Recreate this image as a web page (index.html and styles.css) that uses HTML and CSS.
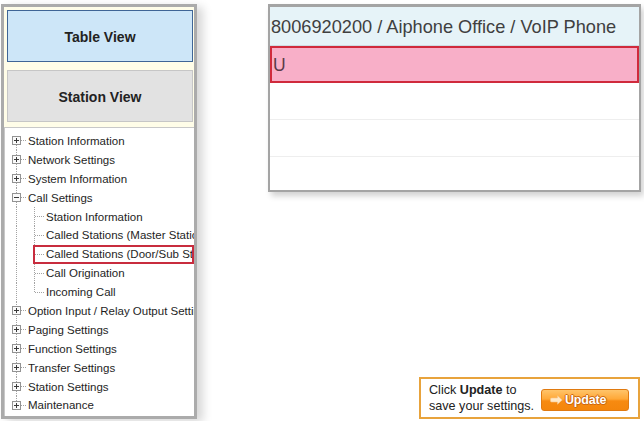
FILE: index.html
```html
<!DOCTYPE html>
<html lang="en">
<head>
<meta charset="utf-8">
<title>Station Settings</title>
<link rel="stylesheet" href="styles.css">
</head>
<body>
<div class="page">
  <aside class="side">
    <div class="view-btn table-view">Table View</div>
    <div class="view-btn station-view">Station View</div>
    <ul class="tree">
      <li class="row first"><span class="sp"></span><svg class="box" width="9" height="9" viewBox="0 0 9 9"><rect x=".5" y=".5" width="8" height="8" fill="#fafafa" stroke="#939393"/><path d="M2 4.5h5M4.5 2v5" stroke="#3a3a3a"/></svg><span class="dash"></span><span class="label">Station Information</span></li>
      <li class="row"><span class="sp"></span><svg class="box" width="9" height="9" viewBox="0 0 9 9"><rect x=".5" y=".5" width="8" height="8" fill="#fafafa" stroke="#939393"/><path d="M2 4.5h5M4.5 2v5" stroke="#3a3a3a"/></svg><span class="dash"></span><span class="label">Network Settings</span></li>
      <li class="row"><span class="sp"></span><svg class="box" width="9" height="9" viewBox="0 0 9 9"><rect x=".5" y=".5" width="8" height="8" fill="#fafafa" stroke="#939393"/><path d="M2 4.5h5M4.5 2v5" stroke="#3a3a3a"/></svg><span class="dash"></span><span class="label">System Information</span></li>
      <li class="row"><span class="sp"></span><svg class="box" width="9" height="9" viewBox="0 0 9 9"><rect x=".5" y=".5" width="8" height="8" fill="#fafafa" stroke="#939393"/><path d="M2 4.5h5" stroke="#3a3a3a"/></svg><span class="dash"></span><span class="label">Call Settings</span></li>
      <li class="row child"><span class="csp"></span><span class="hl"><span class="cdash"></span><span class="label">Station Information</span></span></li>
      <li class="row child"><span class="csp"></span><span class="hl"><span class="cdash"></span><span class="label">Called Stations (Master Station)</span></span></li>
      <li class="row child"><span class="csp"></span><span class="hl selected"><span class="cdash"></span><span class="label">Called Stations (Door/Sub Station)</span></span></li>
      <li class="row child"><span class="csp"></span><span class="hl"><span class="cdash"></span><span class="label">Call Origination</span></span></li>
      <li class="row child lastchild"><span class="csp"></span><span class="hl"><span class="cdash"></span><span class="label">Incoming Call</span></span></li>
      <li class="row"><span class="sp"></span><svg class="box" width="9" height="9" viewBox="0 0 9 9"><rect x=".5" y=".5" width="8" height="8" fill="#fafafa" stroke="#939393"/><path d="M2 4.5h5M4.5 2v5" stroke="#3a3a3a"/></svg><span class="dash"></span><span class="label">Option Input / Relay Output Settings</span></li>
      <li class="row"><span class="sp"></span><svg class="box" width="9" height="9" viewBox="0 0 9 9"><rect x=".5" y=".5" width="8" height="8" fill="#fafafa" stroke="#939393"/><path d="M2 4.5h5M4.5 2v5" stroke="#3a3a3a"/></svg><span class="dash"></span><span class="label">Paging Settings</span></li>
      <li class="row"><span class="sp"></span><svg class="box" width="9" height="9" viewBox="0 0 9 9"><rect x=".5" y=".5" width="8" height="8" fill="#fafafa" stroke="#939393"/><path d="M2 4.5h5M4.5 2v5" stroke="#3a3a3a"/></svg><span class="dash"></span><span class="label">Function Settings</span></li>
      <li class="row"><span class="sp"></span><svg class="box" width="9" height="9" viewBox="0 0 9 9"><rect x=".5" y=".5" width="8" height="8" fill="#fafafa" stroke="#939393"/><path d="M2 4.5h5M4.5 2v5" stroke="#3a3a3a"/></svg><span class="dash"></span><span class="label">Transfer Settings</span></li>
      <li class="row"><span class="sp"></span><svg class="box" width="9" height="9" viewBox="0 0 9 9"><rect x=".5" y=".5" width="8" height="8" fill="#fafafa" stroke="#939393"/><path d="M2 4.5h5M4.5 2v5" stroke="#3a3a3a"/></svg><span class="dash"></span><span class="label">Station Settings</span></li>
      <li class="row last"><span class="sp"></span><svg class="box" width="9" height="9" viewBox="0 0 9 9"><rect x=".5" y=".5" width="8" height="8" fill="#fafafa" stroke="#939393"/><path d="M2 4.5h5M4.5 2v5" stroke="#3a3a3a"/></svg><span class="dash"></span><span class="label">Maintenance</span></li>
    </ul>
  </aside>
  <main class="main">
    <div class="grid">
      <div class="grid-head">8006920200 / Aiphone Office / VoIP Phone</div>
      <div class="grid-row active">U</div>
      <div class="grid-row line"></div>
      <div class="grid-row line"></div>
      <div class="grid-row fill"></div>
    </div>
    <div class="update-box">
      <p class="update-text">Click <b>Update</b> to<br>save your settings.</p>
      <div class="update-btn">
        <svg class="arrow" width="13" height="10" viewBox="0 0 13 10"><path d="M1.5 3h6V0.8L12.2 5 7.5 9.2V7h-6a1 1 0 0 1-1-1V4a1 1 0 0 1 1-1z" fill="#ffe9c8" stroke="#f7c488" stroke-width=".6"/></svg>
        <span class="update-label">Update</span>
      </div>
    </div>
  </main>
</div>
</body>
</html>
```

FILE: styles.css
```css
* { box-sizing: border-box; }

body {
  margin: 0;
  background: #ffffff;
  font-family: "Liberation Sans", Arial, sans-serif;
  color: #1e1e1e;
}

.page {
  display: flex;
  height: 421px;
  padding: 4px 0 2px 1px;
}

/* ---------- left panel ---------- */
.side {
  width: 196px;
  height: 415px;
  border: 3px solid #ababab;
  background: #fffde8;
  display: flex;
  flex-direction: column;
  padding-top: 3px;
  box-shadow: 6px 3px 9px rgba(0, 0, 0, 0.16);
}

.view-btn {
  flex: none;
  height: 52px;
  width: 186px;
  margin-left: 3px;
  padding-top: 2px;
  display: flex;
  align-items: center;
  justify-content: center;
  font-weight: bold;
  font-size: 14px;
  color: #222;
}

.table-view {
  background: #cde6f8;
  border: 1px solid #3f6596;
}

.station-view {
  background: #e2e2e2;
  border: 1px solid #c6c6c6;
  margin-top: 8px;
}

.tree {
  --dots: repeating-linear-gradient(to bottom, #a3a3a3 0 1px, transparent 1px 2px);
  list-style: none;
  margin: 5px 0 0;
  padding: 3.5px 0 0;
  flex: 1;
  background: #ffffff;
  border-top: 1px solid #c8c8c8;
  border-left: 1px solid #c8c8c8;
  overflow: hidden;
}

.row {
  height: 18.9px;
  display: flex;
  align-items: center;
  white-space: nowrap;
  font-size: 11.5px;
  background-image: var(--dots);
  background-repeat: no-repeat;
  background-size: 1px 100%;
  background-position: 11px 0;
}

.row.first {
  background-size: 1px 50%;
  background-position: 11px 100%;
}

.row.last {
  background-size: 1px 50%;
  background-position: 11px 0;
}

.row.child {
  background-image: var(--dots), var(--dots);
  background-size: 1px 100%, 1px 100%;
  background-position: 11px 0, 29px 0;
}

.row.child.lastchild {
  background-size: 1px 100%, 1px 50%;
}

.sp { flex: none; width: 7px; }

.box { flex: none; display: block; }

.dash,
.cdash {
  flex: none;
  height: 1px;
  background: repeating-linear-gradient(to right, #a3a3a3 0 1px, transparent 1px 2px);
}

.dash { width: 5px; margin-right: 2px; }

.csp { flex: none; width: 28px; }

.hl {
  flex: 1;
  min-width: 0;
  height: 100%;
  display: flex;
  align-items: center;
  border: 2px solid transparent;
  border-right: 0;
  overflow: hidden;
}

.hl.selected {
  border-color: #c82c3e;
  border-right: 2px solid #c82c3e;
}

.cdash { width: 9px; margin-right: 2px; }

.label { color: #1e1e1e; }

/* ---------- right side ---------- */
.main {
  margin-left: 71px;
  width: 374px;
  display: flex;
  flex-direction: column;
  justify-content: space-between;
}

.grid {
  width: 373px;
  height: 188px;
  border: 2px solid #a4a4a4;
  border-top-width: 3px;
  display: flex;
  flex-direction: column;
  background: #fff;
  box-shadow: 3px 4px 6px rgba(0, 0, 0, 0.18);
}

.grid-head {
  flex: none;
  height: 39px;
  background: #e6f3f8;
  border-bottom: 1px solid #cfdde3;
  display: flex;
  align-items: center;
  padding: 3px 0 0 1px;
  font-size: 18.2px;
  color: #404040;
  white-space: nowrap;
}

.grid-row {
  flex: none;
  height: 37px;
  display: flex;
  align-items: center;
}

.grid-row.active {
  background: #f8afc8;
  border: 2px solid #d02a3c;
  padding: 1px 0 0 1px;
  font-size: 17.5px;
  color: #5a3a48;
}

.grid-row.line { border-bottom: 1px solid #eeeeee; }

.grid-row.fill { flex: 1; }

.update-box {
  align-self: flex-end;
  margin-right: 2px;
  width: 221px;
  height: 42px;
  border: 2px solid #e8a33c;
  background: #fff;
  display: flex;
  align-items: center;
  padding-left: 8px;
  gap: 7px;
}

.update-text {
  margin: 0;
  font-size: 12.6px;
  line-height: 16px;
  color: #222;
  white-space: nowrap;
}

.update-btn {
  flex: none;
  width: 88px;
  height: 22px;
  margin-top: 4px;
  border: 1px solid #e07a10;
  border-radius: 3px;
  background: linear-gradient(to bottom, #ffc46a 0%, #ffa838 45%, #f78a10 55%, #f4860c 100%);
  display: flex;
  align-items: center;
  padding-left: 8px;
  gap: 2px;
}

.arrow { display: block; }

.update-label {
  font-size: 12.5px;
  font-weight: bold;
  color: #ffffff;
  letter-spacing: -0.2px;
  text-shadow: 0 0 1px #c25a00, 1px 0 0 #d06a10, -1px 0 0 #d06a10, 0 1px 0 #d06a10, 0 -1px 0 #d06a10;
}
```
